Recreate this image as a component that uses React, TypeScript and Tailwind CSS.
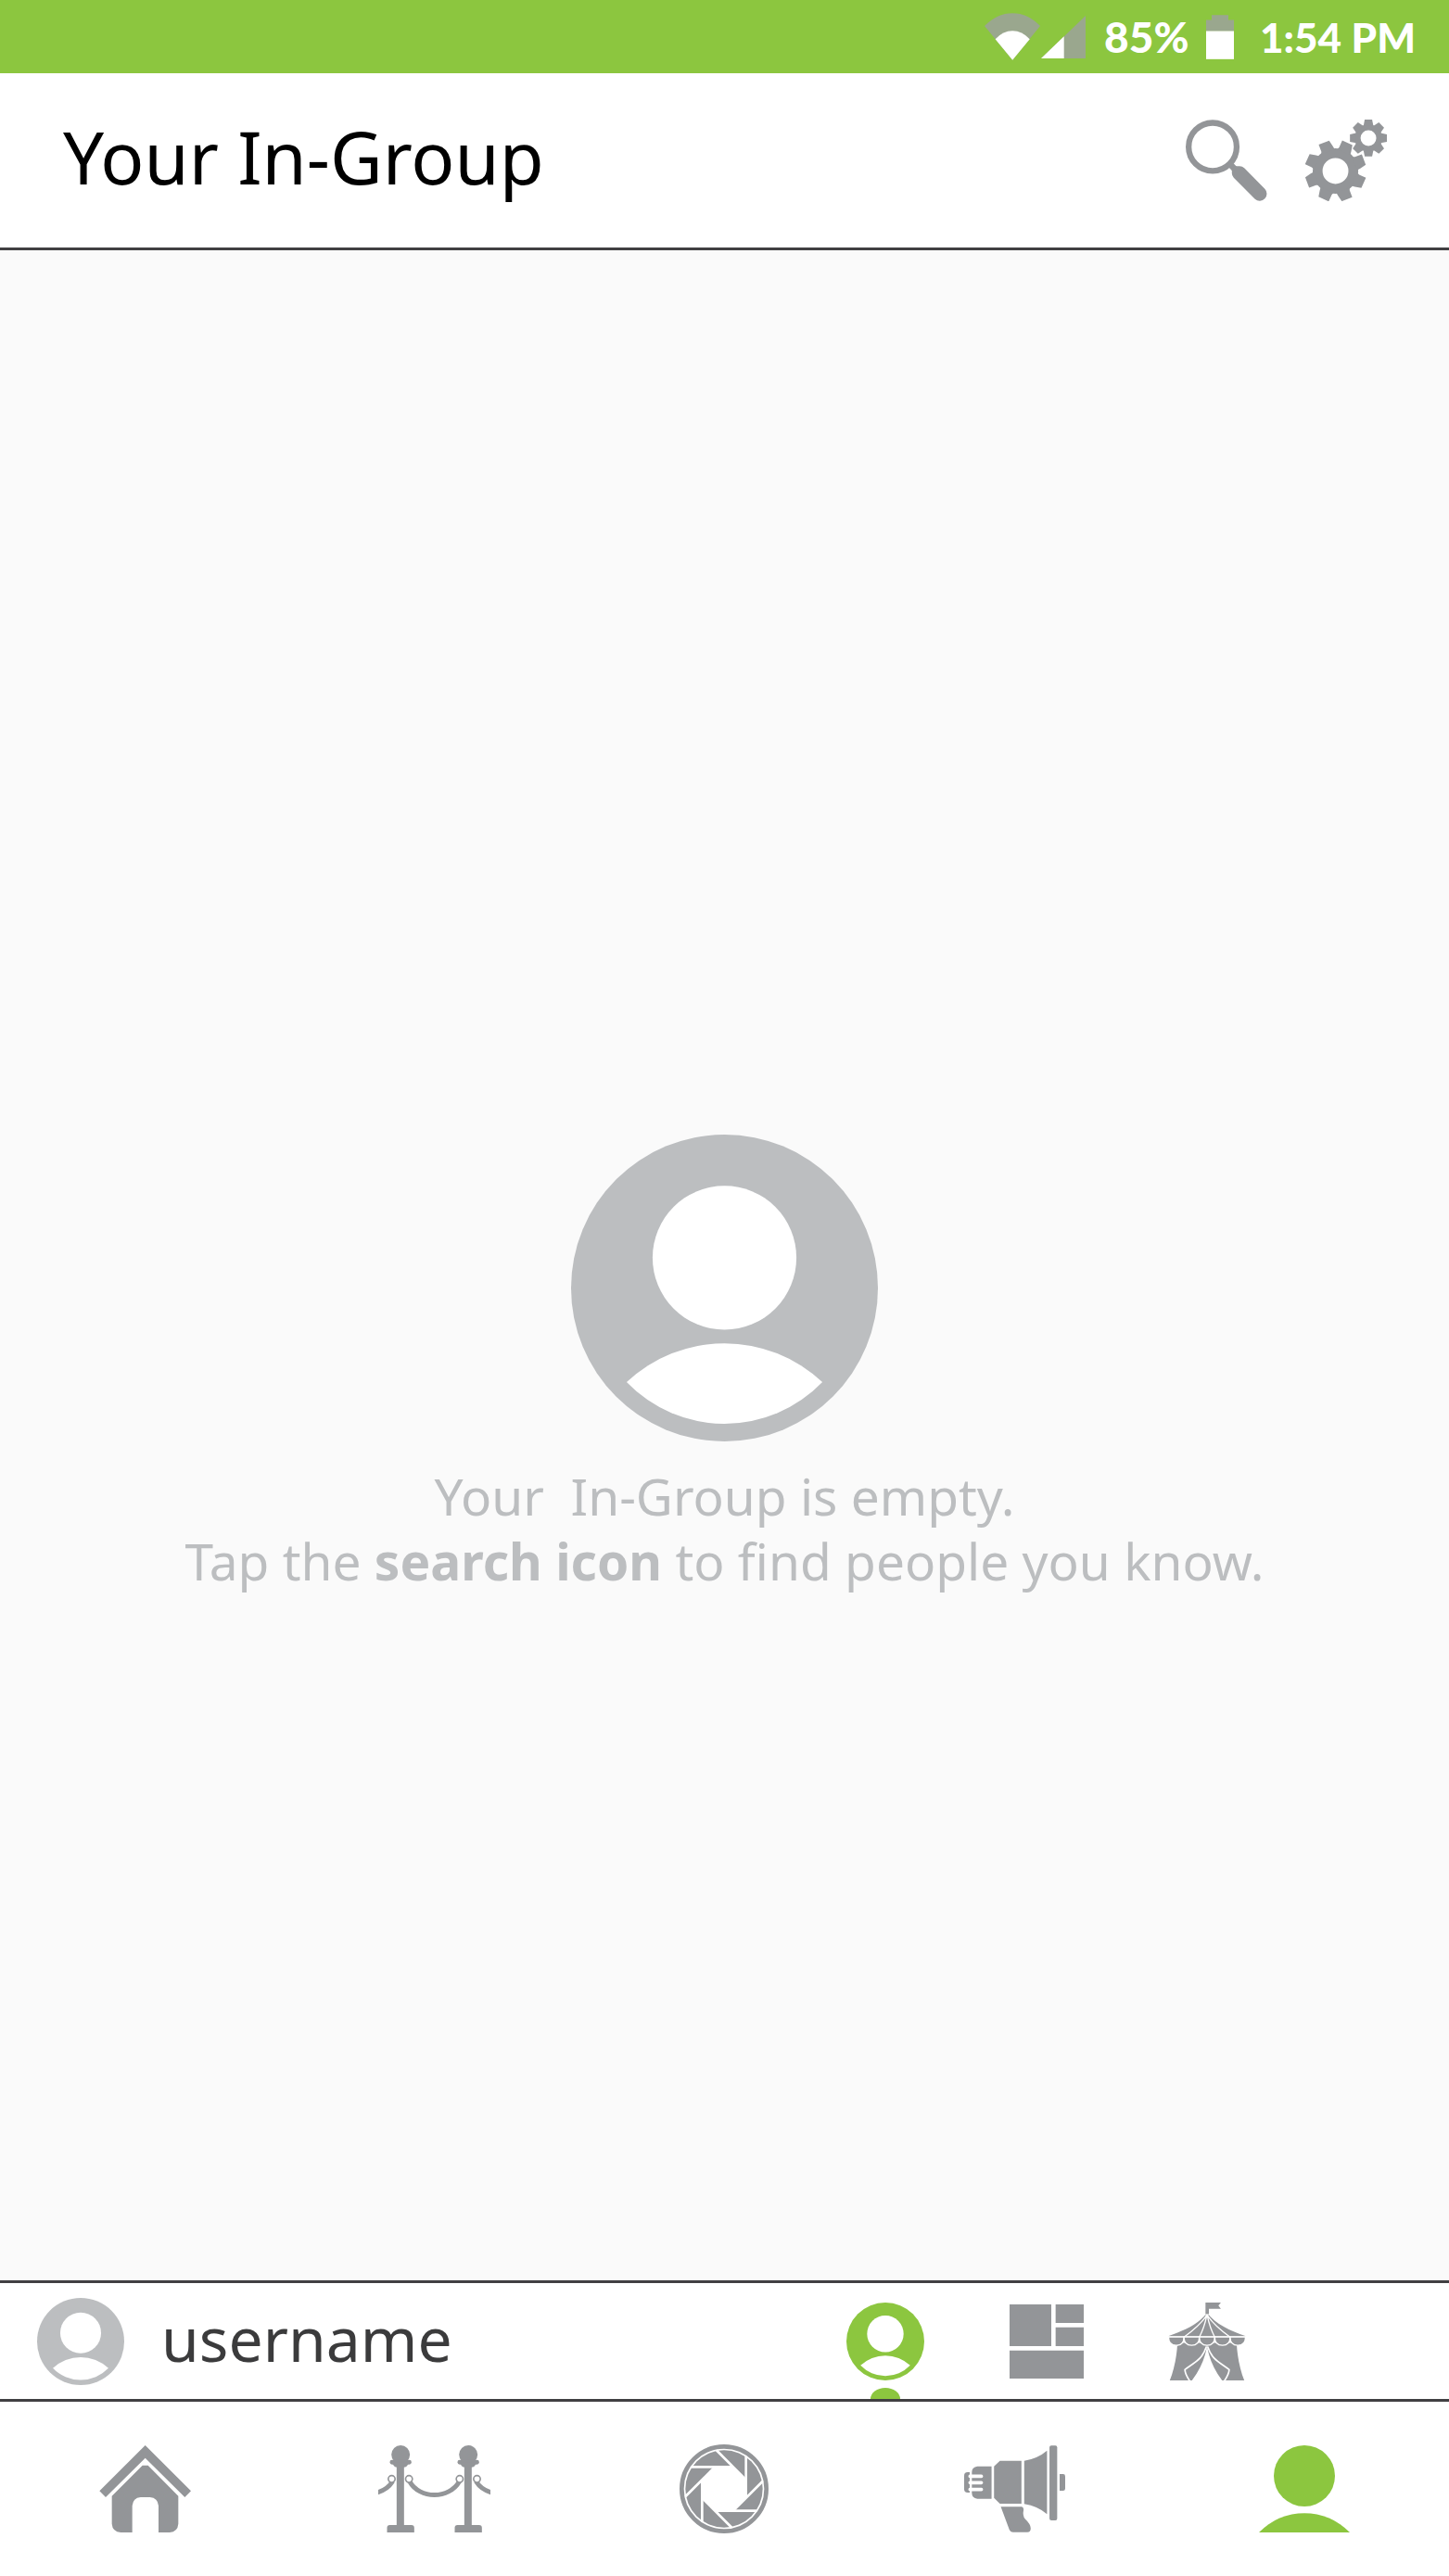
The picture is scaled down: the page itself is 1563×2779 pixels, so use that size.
import type { ReactNode } from "react";

type IconProps = { className?: string };

const EIGHTHS = [0, 45, 90, 135, 180, 225, 270, 315];

function WifiIcon({ className }: IconProps) {
  return (
    <svg viewBox="64 42 181 153" className={className} aria-hidden="true">
      <path d="M64 84 Q104 42 155 42 Q206 42 245 84 L155 195 Z" fill="#9aa78e" />
      <path d="M99 127 Q124 100 155 100 Q186 100 211 127 L155 195 Z" fill="#fff" />
    </svg>
  );
}

function SignalIcon({ className }: IconProps) {
  return (
    <svg viewBox="246 50 144 138" className={className} aria-hidden="true">
      <path d="M390 50 V188 H246 Z" fill="#9aa78e" />
      <path d="M320 117 V188 H246 Z" fill="#fff" />
    </svg>
  );
}

function BatteryIcon({ className }: IconProps) {
  return (
    <svg viewBox="780 47 90 143" className={className} aria-hidden="true">
      <path d="M798 47 H852 V63 H870 V100 H780 V63 H798 Z" fill="#9aa78e" />
      <path d="M780 99 H870 V190 H780 Z" fill="#fff" />
    </svg>
  );
}

function SearchIcon({ className }: IconProps) {
  return (
    <svg viewBox="87 87 265 265" className={className} fill="currentColor" aria-hidden="true">
      <circle cx="174.500" cy="175.500" r="78" fill="none" stroke="currentColor" strokeWidth="19" />
      <path d="M235 222 L254 241 L240 256 L221 236 Z" />
      <path d="M248 238 H262 Q271 238 278 245 L344 312 A23 23 0 0 1 312 345 L243 276 Q237 270 237 262 V248 Z" />
    </svg>
  );
}

function GearsIcon({ className }: IconProps) {
  return (
    <svg viewBox="474 87 265 265" className={className} fill="currentColor" aria-hidden="true">
      <g transform="translate(572 254)">
        <circle r="58" fill="none" stroke="currentColor" strokeWidth="32" />
        {EIGHTHS.map((angle) => (
          <path key={angle} d="M5 -70 L12 -77 L22 -99 L55 -84 L51 -63 L48 -52 Z" transform={`rotate(${angle})`} />
        ))}
      </g>
      <g transform="translate(679 147)">
        <circle r="35" fill="none" stroke="currentColor" strokeWidth="19" />
        {EIGHTHS.map((angle) => (
          <path key={angle} d="M-16 -40 L-12 -60 H12 L16 -40 Z" transform={`rotate(${angle})`} />
        ))}
      </g>
    </svg>
  );
}

function AvatarIcon({ className }: IconProps) {
  return (
    <svg viewBox="107 72 994 994" className={className} aria-hidden="true">
      <circle cx="604" cy="569" r="497" fill="currentColor" />
      <circle cx="604" cy="471" r="233" fill="#fff" />
      <path d="M287 874 A462 462 0 0 1 921 874 A440 440 0 0 1 287 874 Z" fill="#fff" />
    </svg>
  );
}

function LayoutIcon({ className }: IconProps) {
  return (
    <svg viewBox="626 107 240 240" className={className} fill="currentColor" aria-hidden="true">
      <path d="M626 107 H761 V242 H626 Z M775 107 H866 V167 H775 Z M775 181 H866 V242 H775 Z M626 256 H866 V347 H626 Z" />
    </svg>
  );
}

function TentSide() {
  return (
    <>
      <path d="M120 200 C118 245 108 290 95 322 H167 C194 286 209 250 215 215 V200 Z" fill="currentColor" />
      <path d="M214 212 C200 255 177 262 144 287 Q145 302 160 324" fill="none" stroke="#fff" strokeWidth="5" />
    </>
  );
}

function TentIcon({ className }: IconProps) {
  return (
    <svg viewBox="90 69 252 253" className={className} fill="currentColor" aria-hidden="true">
      <TentSide />
      <g transform="translate(432 0) scale(-1 1)">
        <TentSide />
      </g>
      <path d="M211 69 H261 L253 79 L261 89 H222 V106 H211 Z" />
      <path d="M216 102 C245 140 290 160 342 178 H90 C142 160 187 140 216 102 Z" />
      <g stroke="#fff" strokeWidth="4">
        {[116, 166, 216, 266, 316].map((x) => (
          <path key={x} d={`M${x - 25} 181 H${x + 25} Q${x + 25} 208 ${x} 208 Q${x - 25} 208 ${x - 25} 181 Z`} />
        ))}
      </g>
      <g stroke="#fff" strokeWidth="4" fill="none">
        <path d="M214 112 Q190 146 141 181 M215 112 Q207 150 191 181 M217 112 Q225 150 241 181 M218 112 Q242 146 291 181" />
      </g>
      <circle cx="216" cy="111" r="5" fill="#fff" />
    </svg>
  );
}

function HomeIcon({ className }: IconProps) {
  return (
    <svg viewBox="80 84 297 282" className={className} fill="currentColor" aria-hidden="true">
      <path d="M229 84 L377 232 L357 252 L229 125 L101 252 L81 232 Z" />
      <path d="M220 149 H238 L336 248 V338 Q334 364 308 366 H272 V280 Q270 254 244 252 H214 Q189 254 187 280 V366 H150 Q123 364 121 338 V248 Z" />
    </svg>
  );
}

function RopePost() {
  return (
    <>
      <circle cx="127" cy="114" r="30" />
      <rect x="92" y="131" width="70" height="15" rx="7" />
      <path d="M101 140 H152 Q150 155 136 155 H117 Q103 155 101 140 Z" />
      <path d="M114 150 H138 V345 H114 Z" />
      <path d="M83 366 V351 Q83 342 92 342 H162 Q171 342 171 351 V366 Z" />
    </>
  );
}

function RopeIcon({ className }: IconProps) {
  return (
    <svg viewBox="55 84 362 282" className={className} fill="currentColor" aria-hidden="true">
      <RopePost />
      <g transform="translate(219 0)">
        <RopePost />
      </g>
      <g fill="none" stroke="currentColor" strokeWidth="15">
        <path d="M156 201 C188 259 284 259 317 201" />
        <path d="M101 201 Q84 228 50 237 M371 201 Q388 228 422 237" />
      </g>
      <g fill="#fff" stroke="currentColor" strokeWidth="5">
        <circle cx="98" cy="193" r="11" />
        <circle cx="154" cy="193" r="11" />
        <circle cx="318" cy="193" r="11" />
        <circle cx="374" cy="193" r="11" />
      </g>
    </svg>
  );
}

function ApertureIcon({ className }: IconProps) {
  return (
    <svg viewBox="-144 -144 288 288" className={className} aria-hidden="true">
      <circle r="137" fill="none" stroke="currentColor" strokeWidth="14" />
      <circle r="125" fill="currentColor" />
      <path d="M-29 -71 H29 L71 -29 V29 L29 71 H-29 L-71 29 V-29 Z" fill="#fff" />
      {EIGHTHS.map((angle) => (
        <path key={angle} d="M29 -71 H-106" stroke="#fff" strokeWidth="8" transform={`rotate(${angle})`} />
      ))}
    </svg>
  );
}

function MegaphoneIcon({ className }: IconProps) {
  return (
    <svg viewBox="57 84 328 282" className={className} fill="currentColor" aria-hidden="true">
      <path d="M75 171 V237 H68 Q57 237 57 226 V182 Q57 171 68 171 Z" />
      <path d="M146 152 V257 H100 Q82 255 82 238 V171 Q82 154 100 152 Z" />
      <path d="M76 184 H113 M76 205 H113 M76 227 H113" stroke="#fff" strokeWidth="11" strokeLinecap="round" />
      <path d="M154 152 L173 134 H243 V273 H173 L154 254 Z" />
      <path d="M252 134 Q296 127 326 101 V307 Q296 281 252 274 Z" />
      <rect x="334" y="84" width="25" height="243" rx="6" />
      <path d="M367 177 H378 Q385 177 385 184 V224 Q385 231 378 231 H367 Z" />
      <path d="M176 283 H244 Q250 284 250 292 Q246 313 255 323 Q273 340 273 353 Q273 366 262 366 H216 Q208 366 204 358 Z" />
    </svg>
  );
}

function PersonIcon({ className }: IconProps) {
  return (
    <svg viewBox="0 0 98 94" className={className} fill="currentColor" aria-hidden="true">
      <circle cx="49" cy="33" r="33" />
      <path d="M0 94 A68 68 0 0 1 98 94 Z" />
    </svg>
  );
}

function IconButton({ label, active, children }: { label: string; active?: boolean; children: ReactNode }) {
  return (
    <button
      type="button"
      aria-label={label}
      className={
        active
          ? "relative flex h-full w-full items-center justify-center text-[#8cc63f]"
          : "relative flex h-full w-full items-center justify-center text-[#939598]"
      }
    >
      {children}
    </button>
  );
}

export default function App() {
  return (
    <div className="flex min-h-screen flex-col bg-white font-['Noto_Sans',sans-serif]">
      <div className="flex h-[79px] items-center justify-end bg-[#8cc63f] pr-9 font-['Lato',sans-serif] text-[44px] leading-none font-black text-white">
        <WifiIcon className="mr-px h-[51px] w-[60px]" />
        <SignalIcon className="mr-5 h-[46px] w-12" />
        <span className="w-[110px] text-[46px]">85%</span>
        <BatteryIcon className="mr-7 h-12 w-[30px]" />
        <span>1:54 PM</span>
      </div>

      <header className="flex h-[191px] items-center border-b-3 border-[#414042] pr-[67px] pl-[68px]">
        <h1 className="flex-1 pb-2 text-[78px] leading-none text-black">Your In-Group</h1>
        <div className="flex gap-[41px] text-[#939598]">
          <button type="button" aria-label="Search">
            <SearchIcon className="size-[88px]" />
          </button>
          <button type="button" aria-label="Settings">
            <GearsIcon className="size-[88px]" />
          </button>
        </div>
      </header>

      <main className="flex flex-1 flex-col items-center justify-center gap-6 bg-[#fafafa] pt-[212px] text-center text-[#bcbec0]">
        <AvatarIcon className="size-[331px]" />
        <div className="text-[55px] leading-[70px] whitespace-pre">
          <p>{"Your  In-Group is empty."}</p>
          <p>
            {"Tap the "}
            <strong className="font-bold">search icon</strong>
            {" to find people you know."}
          </p>
        </div>
      </main>

      <section className="grid h-[131px] grid-cols-9 border-y-3 border-[#414042]">
        <div className="col-span-5 flex items-center gap-10 pl-10">
          <AvatarIcon className="size-[94px] text-[#bcbec0]" />
          <span className="pb-2 text-[66px] leading-none text-[#3b3b3c]">username</span>
        </div>
        <IconButton label="In-Group" active>
          <AvatarIcon className="size-21" />
          <span className="absolute bottom-0 h-3 w-8 rounded-t-[50%_100%] bg-[#8cc63f]" />
        </IconButton>
        <IconButton label="Boards">
          <LayoutIcon className="size-20" />
        </IconButton>
        <IconButton label="Events">
          <TentIcon className="size-21" />
        </IconButton>
      </section>

      <nav className="grid h-[188px] grid-cols-5" aria-label="Main">
        <IconButton label="Home">
          <HomeIcon className="h-[94px] w-[99px]" />
        </IconButton>
        <IconButton label="Guest list">
          <RopeIcon className="h-[94px] w-[121px]" />
        </IconButton>
        <IconButton label="Camera">
          <ApertureIcon className="size-24" />
        </IconButton>
        <IconButton label="Announcements">
          <MegaphoneIcon className="h-[94px] w-[109px]" />
        </IconButton>
        <IconButton label="Profile" active>
          <PersonIcon className="h-[94px] w-[98px]" />
        </IconButton>
      </nav>
    </div>
  );
}
